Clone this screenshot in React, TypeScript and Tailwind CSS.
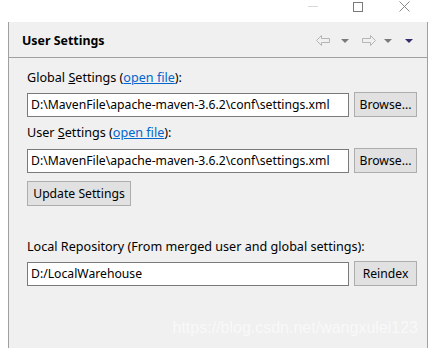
import React from 'react';

const ui = { fontFamily: '"Noto Sans", "Open Sans", sans-serif' };

function Field({ value }: { value: string }) {
  return (
    <div className="h-[24px] w-[322px] border border-[#7a7a7a] bg-white pl-[3px] text-[12.2px] leading-[22px] text-black whitespace-nowrap overflow-hidden">
      {value}
    </div>
  );
}

function WinButton({ label, className = '' }: { label: string; className?: string }) {
  return (
    <div
      className={`h-[25px] border border-[#adadad] bg-[#e1e1e1] text-[12.2px] leading-[23px] text-black text-center ${className}`}
    >
      {label}
    </div>
  );
}

function Label({ children }: { children: React.ReactNode }) {
  return <div className="h-[16px] text-[12.6px] leading-[16px] text-black whitespace-nowrap">{children}</div>;
}

function OpenFile() {
  return (
    <>
      (<span className="text-[#0066cc] underline">open file</span>):
    </>
  );
}

function ArrowLeft() {
  return (
    <svg width="14" height="11" viewBox="0 0 14 11">
      <path d="M0.5 5.5 L5.5 0.5 L5.5 3.5 L13.5 3.5 L13.5 7.5 L5.5 7.5 L5.5 10.5 Z" fill="none" stroke="#b5b5b5" />
    </svg>
  );
}

function ArrowRight() {
  return (
    <svg width="14" height="11" viewBox="0 0 14 11">
      <path d="M13.5 5.5 L8.5 0.5 L8.5 3.5 L0.5 3.5 L0.5 7.5 L8.5 7.5 L8.5 10.5 Z" fill="none" stroke="#b5b5b5" />
    </svg>
  );
}

function Caret({ color }: { color: string }) {
  return (
    <svg width="8" height="4" viewBox="0 0 8 4">
      <path d="M0 0 L8 0 L4 4 Z" fill={color} />
    </svg>
  );
}

export default function App() {
  return (
    <div className="relative w-[429px] h-[348px] bg-white overflow-hidden" style={ui}>
      {/* window chrome */}
      <div className="h-[22px] flex items-start">
        <div className="ml-[308px] mt-[6px] w-[10px] h-px bg-[#d8d8d8]" />
        <div className="ml-[35px] mt-[2px] w-[10px] h-[10px] border border-[#7a7a7a]" />
        <svg className="ml-[36px] mt-[1px]" width="11" height="11" viewBox="0 0 11 11">
          <path d="M0.5 0.5 L10.5 10.5 M10.5 0.5 L0.5 10.5" stroke="#8a8a8a" strokeWidth="1" />
        </svg>
      </div>

      <div className="ml-[8px] w-[420px] h-[326px] border-l border-r border-[#a0a0a0] bg-[#f0f0f0] flex flex-col">
        {/* header */}
        <div className="h-[36px] border-b border-[#a0a0a0] flex items-center pl-[13px] pr-[14px]">
          <div className="text-[12.4px] font-bold text-black leading-[16px] mt-[2px]">User Settings</div>
          <div className="ml-auto flex items-center mt-[2px]">
            <ArrowLeft />
            <div className="ml-[11px]"><Caret color="#7a7a7a" /></div>
            <div className="ml-[13px]"><ArrowRight /></div>
            <div className="ml-[8px]"><Caret color="#7a7a7a" /></div>
            <div className="ml-[13px]"><Caret color="#3b2a6b" /></div>
          </div>
        </div>

        {/* body */}
        <div className="pl-[18px] pt-[12px] flex flex-col">
          <Label>
            Global <span className="underline">S</span>ettings <OpenFile />
          </Label>
          <div className="mt-[6px] flex items-center gap-[5px]">
            <Field value="D:\MavenFile\apache-maven-3.6.2\conf\settings.xml" />
            <WinButton label="Browse..." className="w-[63px]" />
          </div>
          <div className="mt-[8px]">
            <Label>
              User <span className="underline">S</span>ettings <OpenFile />
            </Label>
          </div>
          <div className="mt-[7px] flex items-center gap-[5px]">
            <Field value="D:\MavenFile\apache-maven-3.6.2\conf\settings.xml" />
            <WinButton label="Browse..." className="w-[63px]" />
          </div>
          <div className="mt-[8px] flex">
            <WinButton label="Update Settings" className="w-[104px]" />
          </div>
          <div className="mt-[33px]">
            <Label>Local Repository (From merged user and global settings):</Label>
          </div>
          <div className="mt-[6px] flex items-center gap-[5px]">
            <Field value="D:/LocalWarehouse" />
            <WinButton label="Reindex" className="w-[63px]" />
          </div>
        </div>
      </div>

      <div
        className="absolute right-[11px] top-[319px] text-[16px] leading-[18px] text-white/60 whitespace-nowrap"
        style={{ fontFamily: '"Liberation Sans", Arial, sans-serif' }}
      >
        https://blog.csdn.net/wangxulei123
      </div>
    </div>
  );
}
